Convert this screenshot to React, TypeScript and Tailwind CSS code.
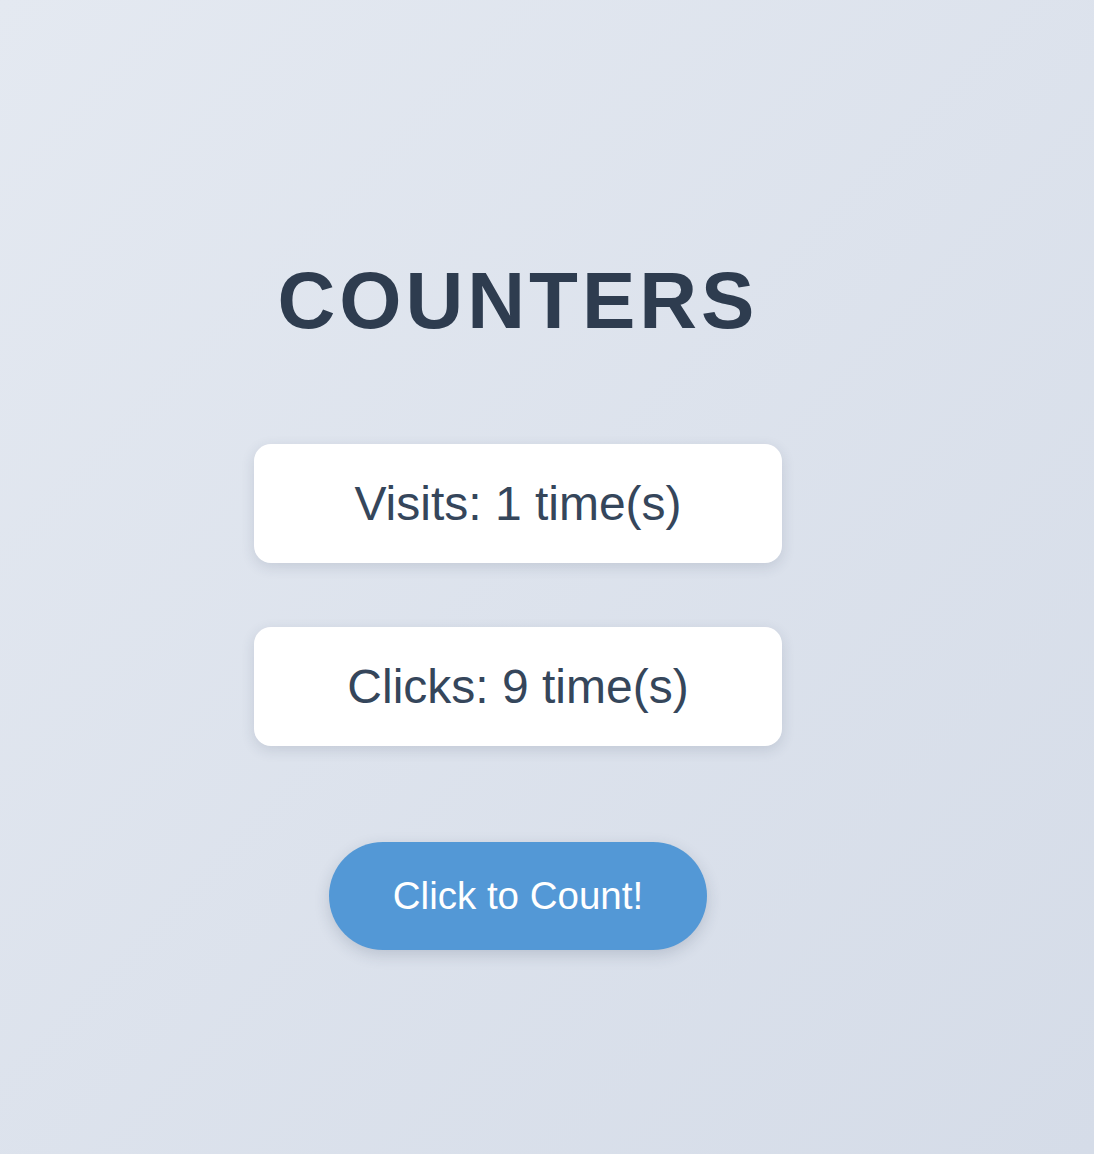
import React, { useState } from 'react';

const App = () => {
  const [clicks, setClicks] = useState(9);
  const visits = 1;

  return (
    <div
      className="min-h-screen w-full bg-gradient-to-br from-[#e4e9f1] to-[#d5dce8] flex flex-col items-center pt-[261px] pr-[58px]"
      style={{ fontFamily: '"Liberation Sans", Arial, sans-serif' }}
    >
      {/* TITLE */}
      <h1 className="text-[80px] leading-none font-bold tracking-[0.05em] text-[#2e3c4f]">
        COUNTERS
      </h1>

      {/* COUNTERS */}
      <div className="mt-[103px] flex flex-col gap-16">
        <div className="flex h-[119px] w-[528px] items-center justify-center rounded-[17px] bg-white text-[48px] text-[#35465b] shadow-[0_4px_14px_rgba(40,55,85,0.14)]">
          Visits: {visits} time(s)
        </div>
        <div className="flex h-[119px] w-[528px] items-center justify-center rounded-[17px] bg-white text-[48px] text-[#35465b] shadow-[0_4px_14px_rgba(40,55,85,0.14)]">
          Clicks: {clicks} time(s)
        </div>
      </div>

      {/* BUTTON */}
      <button
        onClick={() => setClicks((c) => c + 1)}
        className="mt-24 h-[108px] w-[378px] rounded-full bg-[#5398d6] text-[38.5px] text-white shadow-[0_5px_15px_rgba(40,55,85,0.18)]"
      >
        Click to Count!
      </button>
    </div>
  );
};

export default App;
